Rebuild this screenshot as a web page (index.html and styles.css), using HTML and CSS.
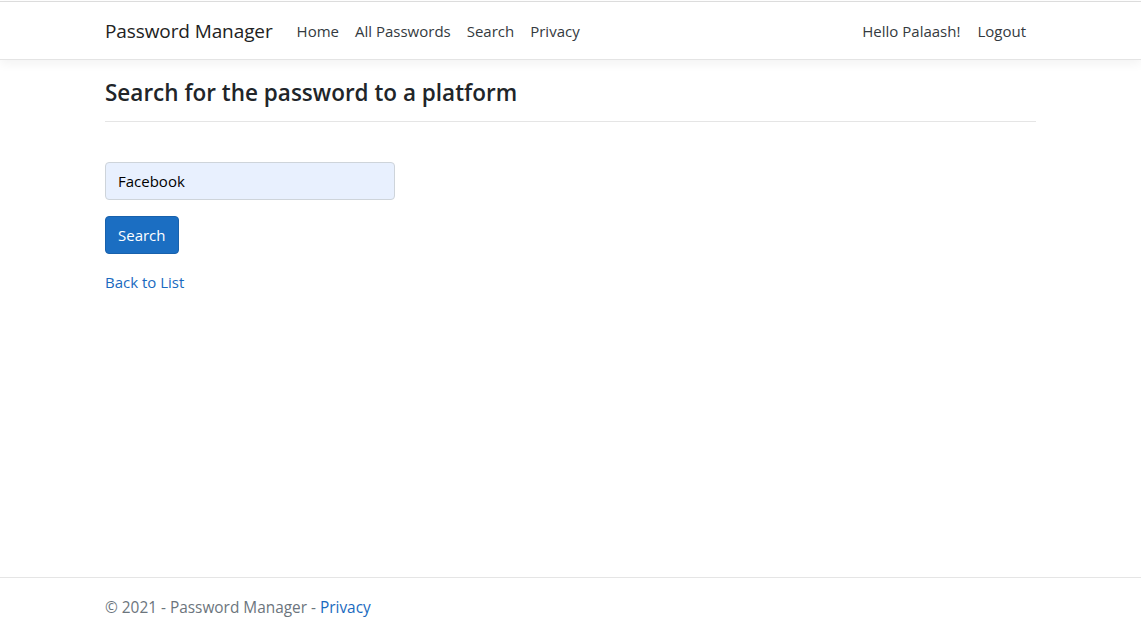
FILE: index.html
```html
<!DOCTYPE html>
<html lang="en">
<head>
<meta charset="utf-8">
<title>Search - Password Manager</title>
<link rel="stylesheet" href="styles.css">
</head>
<body>
<div class="page">
  <header class="navbar">
    <div class="container nav-inner">
      <a class="brand" href="#">Password Manager</a>
      <ul class="nav-links">
        <li><a href="#">Home</a></li>
        <li><a href="#">All Passwords</a></li>
        <li><a href="#">Search</a></li>
        <li><a href="#">Privacy</a></li>
      </ul>
      <ul class="nav-links nav-right">
        <li><span class="hello">Hello Palaash!</span></li>
        <li><a href="#">Logout</a></li>
      </ul>
    </div>
  </header>
  <main class="container main">
    <h4 class="title">Search for the password to a platform</h4>
    <hr class="rule">
    <form class="form">
      <input class="field" type="text" value="Facebook">
      <button class="btn" type="button">Search</button>
    </form>
    <a class="back" href="#">Back to List</a>
  </main>
  <footer class="footer">
    <div class="container">&copy; 2021 - Password Manager - <a href="#">Privacy</a></div>
  </footer>
</div>
</body>
</html>
```

FILE: styles.css
```css
* { box-sizing: border-box; }
html, body { margin: 0; padding: 0; }
body {
  font-family: "Open Sans", "Noto Sans", sans-serif;
  font-size: 15px;
  color: #212529;
  background: #fff;
}
a { color: #1a6ac0; text-decoration: none; }
.page { min-height: 100vh; display: flex; flex-direction: column; }
.container { width: 961px; margin: 0 auto; padding: 0 15px; }
.navbar {
  margin-top: 1px;
  border-top: 1px solid #dcdcdc;
  border-bottom: 1px solid #e4e4e4;
  box-shadow: 0 4px 10px rgba(0,0,0,0.05);
  background: #fff;
  height: 59px;
}
.nav-inner { display: flex; align-items: center; height: 57px; }
.brand { font-size: 19px; color: #222; margin-right: 24px; letter-spacing: -0.1px; }
.nav-links { list-style: none; margin: 0; padding: 0; display: flex; gap: 16px; }
.nav-links a, .hello { color: #343a40; font-size: 15px; }
.nav-right { margin-left: auto; gap: 17px; padding-right: 10px; }
.main { flex: 1; }
.title { font-size: 22.5px; font-weight: 600; margin: 17px 0 0; line-height: 32px; color: #212529; }
.rule { border: 0; border-top: 1px solid #e5e5e5; margin: 12px 0 0; }
.form { display: flex; flex-direction: column; align-items: flex-start; margin-top: 40px; gap: 16px; }
.field {
  width: 290px; height: 38px;
  border: 1px solid #ced4da; border-radius: 4px;
  background: #e8f0fe;
  font-family: inherit; font-size: 15px; color: #000;
  padding: 0 12px;
}
.btn {
  height: 38px; padding: 0 12px;
  background: #1b6ec2; border: 1px solid #1861ac; border-radius: 4px;
  color: #fff; font-family: inherit; font-size: 15px;
}
.back { display: inline-block; margin-top: 17px; font-size: 15px; line-height: 22px; }
.footer { border-top: 1px solid #e5e5e5; height: 60px; line-height: 60px; color: #6c757d; font-size: 15.4px; }
```
